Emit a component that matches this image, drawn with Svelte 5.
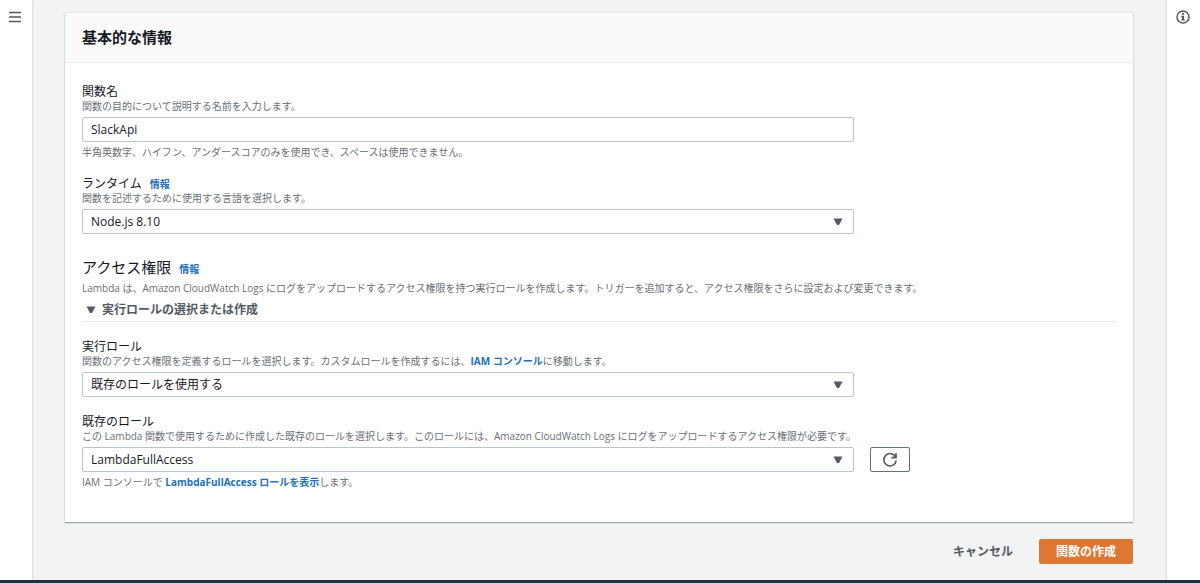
<script>
  let name = $state("SlackApi");
  let runtime = $state("Node.js 8.10");
  let roleType = $state("既存のロールを使用する");
  let role = $state("LambdaFullAccess");
  let expanded = $state(true);

  const runtimes = ["Node.js 8.10"];
  const roleTypes = ["既存のロールを使用する"];
  const roles = ["LambdaFullAccess"];
</script>

{#snippet arrow()}
  <svg class="arrow" width="10" height="8" viewBox="0 0 10 8" aria-hidden="true">
    <path d="M0.5 0.5h9L6 7H4z" fill="#545b64" />
  </svg>
{/snippet}

<div class="page">
  <div class="columns">
    <nav class="rail">
      <button class="icon" aria-label="メニュー">
        <svg width="12" height="12" viewBox="0 0 12 12">
          <path d="M0 1.5h12M0 6h12M0 10.5h12" stroke="#545b64" stroke-width="1.5" />
        </svg>
      </button>
    </nav>

    <main>
      <section class="card">
        <header><h2>基本的な情報</h2></header>
        <div class="body">
          <div class="field">
            <label for="name">関数名</label>
            <p class="hint">関数の目的について説明する名前を入力します。</p>
            <input id="name" type="text" bind:value={name} />
            <p class="hint below">半角英数字、ハイフン、アンダースコアのみを使用でき、スペースは使用できません。</p>
          </div>

          <div class="field">
            <div class="label-row">
              <label for="runtime">ランタイム</label>
              <a href="#runtime">情報</a>
            </div>
            <p class="hint">関数を記述するために使用する言語を選択します。</p>
            <div class="select">
              <select id="runtime" bind:value={runtime}>
                {#each runtimes as item}<option>{item}</option>{/each}
              </select>
              {@render arrow()}
            </div>
          </div>

          <div class="permissions" id="permissions">
            <div class="label-row">
              <h3>アクセス権限</h3>
              <a href="#permissions">情報</a>
            </div>
            <p class="hint">Lambda は、Amazon CloudWatch Logs にログをアップロードするアクセス権限を持つ実行ロールを作成します。トリガーを追加すると、アクセス権限をさらに設定および変更できます。</p>
            <button class="expander" aria-expanded={expanded} onclick={() => (expanded = !expanded)}>
              {@render arrow()}
              実行ロールの選択または作成
            </button>
          </div>

          {#if expanded}
            <div class="field">
              <label for="role-type">実行ロール</label>
              <p class="hint">関数のアクセス権限を定義するロールを選択します。カスタムロールを作成するには、<a href="#iam">IAM コンソール</a>に移動します。</p>
              <div class="select">
                <select id="role-type" bind:value={roleType}>
                  {#each roleTypes as item}<option>{item}</option>{/each}
                </select>
                {@render arrow()}
              </div>
            </div>

            <div class="field">
              <label for="role">既存のロール</label>
              <p class="hint">この Lambda 関数で使用するために作成した既存のロールを選択します。このロールには、Amazon CloudWatch Logs にログをアップロードするアクセス権限が必要です。</p>
              <div class="with-action">
                <div class="select">
                  <select id="role" bind:value={role}>
                    {#each roles as item}<option>{item}</option>{/each}
                  </select>
                  {@render arrow()}
                </div>
                <button class="refresh" aria-label="更新">
                  <svg width="16" height="16" viewBox="0 0 16 16" fill="none" stroke="#545b64" stroke-width="1.6">
                    <path d="M13.6 5A6.2 6.2 0 1 0 14.2 8.4" />
                    <path d="M14 1v4.6H9.4" />
                    <path d="M14 2.6v3h-3z" fill="#545b64" stroke="none" />
                  </svg>
                </button>
              </div>
              <p class="hint below">IAM コンソールで <a href="#role">LambdaFullAccess ロールを表示</a>します。</p>
            </div>
          {/if}
        </div>
      </section>

      <div class="actions">
        <button class="cancel">キャンセル</button>
        <button class="create">関数の作成</button>
      </div>
    </main>

    <aside class="rail">
      <button class="icon" aria-label="情報">
        <svg width="14" height="14" viewBox="0 0 14 14">
          <circle cx="7" cy="7" r="6" fill="none" stroke="#545b64" stroke-width="1.5" />
          <path d="M6 3h2v1.7H6zM5.2 5.8H8v3.6h1v1.2H5V9.4h1V7H5.2z" fill="#545b64" />
        </svg>
      </button>
    </aside>
  </div>
  <footer></footer>
</div>

<style>
  :global(body) {
    margin: 0;
  }

  .page {
    display: flex;
    flex-direction: column;
    min-height: 100vh;
    background: #f2f3f3;
    color: #16191f;
    font: 12px/16px "Open Sans", "Noto Sans CJK JP", sans-serif;
  }

  .columns {
    display: flex;
    flex: 1;
  }

  .rail {
    flex: none;
    width: 32px;
    background: #fff;
    box-shadow: 0 0 2px #aab7b8;
  }

  aside.rail {
    width: 33px;
  }

  main {
    flex: 1;
    min-width: 0;
    padding: 13px 34px 16px 33px;
  }

  h2, h3, p {
    margin: 0;
  }

  button, input, select {
    box-sizing: border-box;
    font: inherit;
    color: inherit;
  }

  button {
    display: flex;
    align-items: center;
    justify-content: center;
    padding: 0;
    border: none;
    background: none;
    cursor: pointer;
  }

  .icon {
    width: 30px;
    height: 33px;
  }

  aside .icon {
    width: 32px;
  }

  .card {
    background: #fff;
    box-shadow: 0 1px 1px #98a3a8, 0 0 2px #c4cccc;
  }

  .card header {
    padding: 14px 17px 15px;
    border-bottom: 1px solid #eaeded;
    background: #fafafa;
  }

  h2 {
    font-size: 15px;
    line-height: 20px;
    font-weight: 700;
  }

  .body {
    display: flex;
    flex-direction: column;
    gap: 17px;
    padding: 21px 17px 33px;
  }

  label {
    display: block;
    line-height: 15px;
  }

  .label-row {
    display: flex;
    align-items: baseline;
    gap: 8px;
  }

  .hint, .label-row a {
    font-size: 10px;
    line-height: 14px;
  }

  .hint {
    color: #687078;
  }

  .below {
    padding-top: 3px;
  }

  a {
    color: #2170b8;
    font-weight: 700;
    text-decoration: none;
  }

  input, .select {
    width: 100%;
    max-width: 772px;
    margin-top: 4px;
  }

  input, select {
    display: block;
    height: 25px;
    padding: 0 8px;
    border: 1px solid #b9c4c4;
    border-radius: 2px;
    background: #fff;
  }

  .select {
    display: grid;
    align-items: center;
  }

  select {
    grid-area: 1 / 1;
    width: 100%;
    appearance: none;
  }

  .select .arrow {
    grid-area: 1 / 1;
    justify-self: end;
    margin-right: 11px;
    pointer-events: none;
  }

  .permissions {
    padding-top: 6px;
    border-bottom: 1px solid #eaeded;
  }

  h3 {
    font-size: 15px;
    line-height: 20px;
    font-weight: 400;
  }

  .permissions .hint {
    padding-top: 4px;
  }

  .expander {
    gap: 6px;
    padding: 7px 4px 3px;
    color: #545b64;
    font-weight: 700;
  }

  .expander[aria-expanded="false"] .arrow {
    transform: rotate(-90deg);
  }

  .with-action {
    display: flex;
    align-items: flex-end;
    gap: 16px;
  }

  .refresh {
    flex: none;
    width: 40px;
    height: 25px;
    border: 1px solid #687078;
    border-radius: 2px;
  }

  .actions {
    display: flex;
    justify-content: flex-end;
    gap: 9px;
    padding-top: 17px;
  }

  .actions button {
    height: 25px;
    padding: 0 17px;
    border-radius: 2px;
    color: #545b64;
    font-weight: 700;
  }

  .actions .create {
    background: #dd7732;
    color: #fff;
  }

  footer {
    height: 3px;
    background: #232f44;
  }
</style>
